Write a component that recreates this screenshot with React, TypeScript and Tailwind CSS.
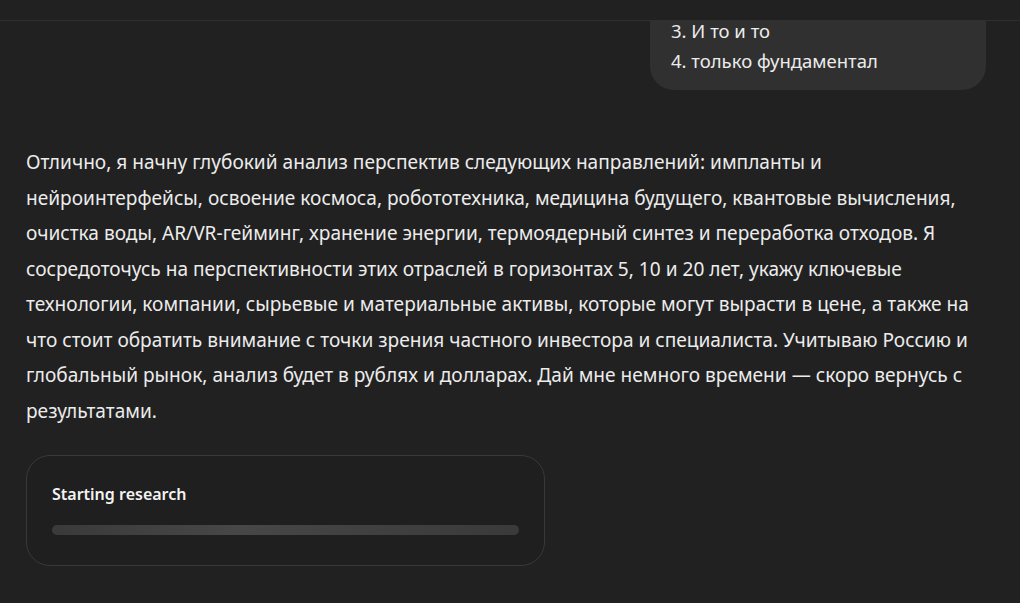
export default function App() {
  return (
    <div
      className="h-[603px] w-[1020px] overflow-hidden bg-[#212121] text-[#ececec]"
      style={{ fontFamily: '"Noto Sans", "Open Sans", sans-serif' }}
    >
      {/* Top bar */}
      <div className="relative z-10 h-[21px] border-b border-[#2f2f2f] bg-[#212121]" />

      {/* Conversation */}
      <div className="-mt-[6px] flex flex-col px-[26px]">
        {/* User bubble (scrolled, only the tail is visible) */}
        <div className="flex justify-end pr-[8px]">
          <div className="w-[336px] rounded-b-[24px] bg-[#303030] px-[21px] pt-[1px] pb-[14px] text-[18.5px] leading-[30px]">
            <div>3. И то и то</div>
            <div>4. только фундаментал</div>
          </div>
        </div>

        {/* Assistant reply */}
        <p className="mt-[55px] w-[947px] text-[19.1px] leading-[35.5px] text-[#ececec]">
          Отлично, я начну глубокий анализ перспектив следующих направлений: импланты и
          нейроинтерфейсы, освоение космоса, робототехника, медицина будущего, квантовые
          вычисления, очистка воды, AR/VR-гейминг, хранение энергии, термоядерный синтез и
          переработка отходов. Я сосредоточусь на перспективности этих отраслей в горизонтах 5,
          10 и 20 лет, укажу ключевые технологии, компании, сырьевые и материальные активы, которые
          могут вырасти в цене, а также на что стоит обратить внимание с точки зрения частного
          инвестора и специалиста. Учитываю Россию и глобальный рынок, анализ будет в рублях и
          долларах. Дай мне немного времени — скоро вернусь с результатами.
        </p>

        {/* Research card */}
        <div className="mt-[26px] w-[519px] rounded-[24px] border border-[#393939] bg-[#1f1f1f] px-[25px] pt-[27px] pb-[30px]">
          <div className="text-[16px] font-semibold leading-[22px] text-[#f3f3f3]">Starting research</div>
          <div className="mt-[20px] h-[10px] w-full rounded-full bg-[linear-gradient(90deg,#3a3a3a_0%,#474747_40%,#424242_60%,#3a3a3a_100%)]" />
        </div>
      </div>
    </div>
  );
}
